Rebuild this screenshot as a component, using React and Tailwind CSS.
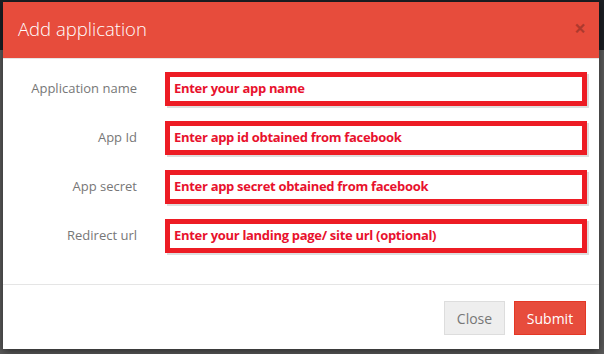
export default function App() {
  const rows = [
    { label: "Application name", text: "Enter your app name" },
    { label: "App Id", text: "Enter app id obtained from facebook" },
    { label: "App secret", text: "Enter app secret obtained from facebook" },
    { label: "Redirect url", text: "Enter your landing page/ site url (optional)" },
  ];
  return (
    <div className="w-[604px] h-[354px] overflow-hidden bg-[#5b5b5b] relative" style={{ fontFamily: '"Open Sans", "Liberation Sans", sans-serif' }}>
      <div className="absolute top-0 left-0 right-0 h-[50px] bg-[#1c1f24]" />
      <div className="relative ml-[3px] mt-[2px] w-[596px] h-[347px] bg-white flex flex-col shadow-[0_3px_9px_rgba(0,0,0,0.5)]">
        <div className="h-[57px] bg-[#e74c3c] border-b border-[#e5e5e5] flex items-center justify-between pl-[15px] pr-[13px]">
          <h4 className="text-[18.5px] text-white font-light leading-none mb-[2px]">Add application</h4>
          <span className="text-[21px] font-bold leading-none text-black/25 mb-[3px]">×</span>
        </div>
        <div className="flex-1 pl-[15px] pr-[12px] pt-[13px] flex flex-col gap-[15px] border-b border-[#e5e5e5]">
          {rows.map((r, i) => (
            <div key={i} className="flex items-center gap-[13px]">
              <div className="w-[134px] pr-[15px] text-right text-[13px] text-[#777] shrink-0">{r.label}</div>
              <div className="flex-1 h-[34px] border-[5px] border-[#ed1c24] bg-white flex items-center pl-[4px] shadow-[2px_2px_0_#dedede]">
                <span className="text-[13px] font-bold text-[#e8112d] tracking-[-0.3px]">{r.text}</span>
              </div>
            </div>
          ))}
        </div>
        <div className="h-[64px] flex items-start justify-end gap-[9px] pt-[16px] pr-[13px]">
          <button className="h-[34px] w-[61px] bg-[#eeeeee] border border-[#dddddd] text-[14px] text-[#777]">Close</button>
          <button className="h-[34px] w-[72px] bg-[#e74c3c] border border-[#e43725] text-[14px] text-white">Submit</button>
        </div>
      </div>
    </div>
  );
}
